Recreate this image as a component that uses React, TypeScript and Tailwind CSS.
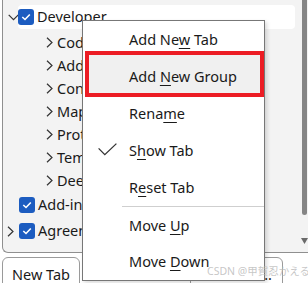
import React from "react";

const font = "font-['Noto_Sans',sans-serif]";

function Chevron({ open = false }: { open?: boolean }) {
  if (open)
    return (
      <svg width="11" height="7" viewBox="0 0 11 7" className="block">
        <path d="M0.7 0.8 L5.5 5.6 L10.3 0.8" fill="none" stroke="#333" strokeWidth="1.2" />
      </svg>
    );
  return (
    <svg width="7" height="11" viewBox="0 0 7 11" className="block">
      <path d="M1 0.7 L6 5.5 L1 10.3" fill="none" stroke="#333" strokeWidth="1.2" />
    </svg>
  );
}

function Box() {
  return (
    <span className="flex size-4 shrink-0 items-center justify-center rounded-[3px] bg-[#1c5cc0]">
      <svg width="10" height="8" viewBox="0 0 10 8">
        <path d="M1.3 4 L4 6.5 L8.8 1.5" fill="none" stroke="#fff" strokeWidth="1.6" />
      </svg>
    </span>
  );
}

const CHILDREN = ["Code", "Add-ins", "Controls", "Map", "Protect", "Templates", "Deep"];

const U = ({ children }: { children: React.ReactNode }) => (
  <span className="underline decoration-1 underline-offset-[3px]">{children}</span>
);

function Item({ children, h = "h-[37px]" }: { children: React.ReactNode; h?: string }) {
  return (
    <div className={`relative flex items-center pl-[46px] ${h}`}>
      <span className="whitespace-pre">{children}</span>
    </div>
  );
}

export default function App() {
  return (
    <div className={`relative h-[283px] w-[308px] overflow-hidden bg-white text-[14.5px] text-[#1a1a1a] ${font}`}>
      {/* tree panel */}
      <div className="ml-[2px] flex h-[253px] rounded-bl-[6px] border-b border-l border-[#8f8f8f] bg-[#f3f3f3]">
        <div className="flex-1 pt-[5px]">
          <div className="flex h-[24px] items-center">
            <span className="flex w-[16px] justify-end">
              <Chevron open />
            </span>
            <div className="ml-[-1px] mr-[5px] flex h-full flex-1 items-center gap-[3px] rounded-[4px] bg-white">
              <Box />
              <span>Developer</span>
            </div>
          </div>
          <div className="pt-[2px]">
            {CHILDREN.map((c) => (
              <div key={c} className="flex h-[23px] items-center pl-[43px]">
                <Chevron />
                <span className="ml-[4px] whitespace-nowrap">{c}</span>
              </div>
            ))}
          </div>
          <div className="flex h-[26px] items-center pl-[16px]">
            <Box />
            <span className="ml-[3px]">Add-ins</span>
          </div>
          <div className="flex h-[26px] items-center pl-[4px]">
            <Chevron />
            <span className="ml-[5px]" />
            <Box />
            <span className="ml-[3px]">Agreement</span>
          </div>
        </div>
        <div className="flex w-[8px] flex-col">
          <div className="ml-[2px] h-[215px] w-[5px] rounded-b-full bg-[#858585]" />
          <svg width="7" height="7" viewBox="0 0 7 7" className="ml-[1px] mt-[23px]">
            <path d="M0 0 H7 L3.5 6 Z" fill="#6a6a6a" />
          </svg>
        </div>
      </div>

      {/* bottom buttons */}
      <div className="mt-[4px] flex items-start">
        <div className="ml-[2px] flex h-[40px] w-[78px] justify-center rounded-t-[6px] border border-[#9a9a9a] pt-[6px]">
          <span className="whitespace-pre">
            Ne<U>w</U> Tab
          </span>
        </div>
        <div className="ml-[110px] flex h-[40px] w-[93px] justify-end rounded-t-[6px] border border-[#9a9a9a] pr-[10px] pt-[6px]">
          <span>Rename...</span>
        </div>
      </div>

      {/* context menu */}
      <div className="absolute left-[82px] top-[20px] w-[183px] border border-[#777] bg-white shadow-[2px_2px_4px_rgba(0,0,0,0.15)]">
        <div className="absolute left-[2px] top-[30px] h-[46px] w-[179px] border-[4px] border-[#ec1c24] bg-[#f0f0f0]" />
        <div className="relative">
          <Item>
            Add Ne<U>w</U> Tab
          </Item>
          <Item>
            Add <U>N</U>ew Group
          </Item>
          <Item>
            Rena<U>m</U>e
          </Item>
          <div className="relative">
            <svg width="19" height="13" viewBox="0 0 19 13" className="absolute left-[15px] top-[11px]">
              <path d="M0.6 5.4 L6.8 11.6 L18.4 0.6" fill="none" stroke="#333" strokeWidth="1.3" />
            </svg>
            <Item>
              S<U>h</U>ow Tab
            </Item>
          </div>
          <Item>
            R<U>e</U>set Tab
          </Item>
          <div className="ml-[39px] h-px bg-[#cfcfcf]" />
          <Item>
            Move <U>U</U>p
          </Item>
          <Item h="h-[36px]">
            Move <U>D</U>own
          </Item>
        </div>
      </div>

      {/* watermark */}
      <div className="pointer-events-none absolute left-[207px] top-[264px] whitespace-nowrap font-['Noto_Sans','Noto_Sans_CJK_JP',sans-serif] text-[10.5px] text-[#b8b8b8]/80">
        CSDN @甲賀忍かえる
      </div>
    </div>
  );
}
